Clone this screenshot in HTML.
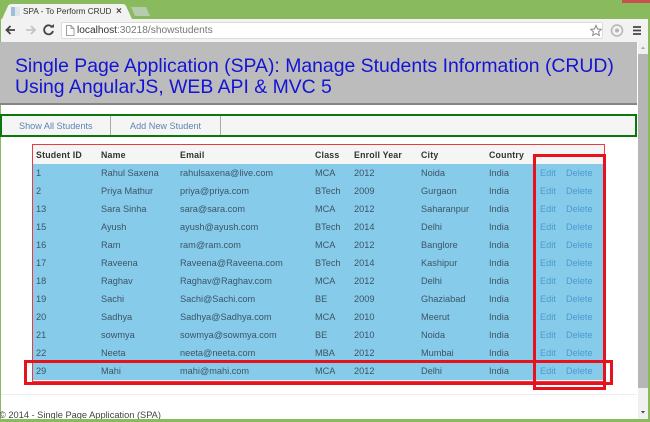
<!DOCTYPE html>
<html><head><meta charset="utf-8"><style>
html,body{margin:0;padding:0;width:650px;height:422px;overflow:hidden;background:#8aba5e}
body{position:relative;font-family:"Liberation Sans",sans-serif}
div,a,span{position:absolute;white-space:nowrap;box-sizing:border-box}
.c{font-size:9.2px;line-height:14px;color:#3a5566}
.h{font-size:8.8px;line-height:14px;color:#333;font-weight:bold;letter-spacing:.2px}
.l{font-size:9.2px;line-height:14px;color:#4a9ad0}
.r{position:absolute;border-style:solid;border-color:#e8121f;box-sizing:border-box}
</style></head><body>
<div style="left:622px;top:0;width:28px;height:3px;background:#c75050"></div>
<svg style="position:absolute;left:0;top:0" width="160" height="20"><path d="M2 19 L8 6 Q9 4 12 4 L122 4 Q125 4 126 6 L132 19 Z" fill="#f2f2f2"/><path d="M131 7 L146 7 L150 16 L135 16 Z" fill="#b5ccae"/><rect x="11" y="7" width="4" height="9" fill="#9cc0dc"/><rect x="15" y="7" width="5" height="9" fill="#dfe6ea"/></svg>
<div style="left:23px;top:5px;font-size:8.2px;line-height:13px;color:#333;width:88px;overflow:hidden">SPA - To Perform CRUD o</div>
<div style="left:116px;top:5px;font-size:10px;line-height:13px;color:#444;font-weight:bold">×</div>
<div style="left:1px;top:19px;width:647px;height:23px;background:#f2f2f2"></div>
<svg style="position:absolute;left:0;top:18px" width="60" height="23"><path d="M15 12 H7 M10.5 8 L6.500 12 L10.500 16" stroke="#444" stroke-width="1.800" fill="none"/><path d="M35 12 H26 M31 8 L35 12 L31 16" stroke="#c4c4c4" stroke-width="1.800" fill="none"/><path d="M52.500 9.500 A4.500 4.500 0 1 0 53 13" stroke="#444" stroke-width="1.800" fill="none"/><path d="M50 9.500 H54 V6 Z" fill="#444"/></svg>
<div style="left:61px;top:22px;width:542px;height:17px;background:#fff;border:1px solid #dcdcdc;border-radius:2px"></div>
<svg style="position:absolute;left:64px;top:24px" width="12" height="13"><path d="M2.500 1.500 H7 L10 4.500 V11.500 H2.500 Z M7 1.500 V4.500 H10" stroke="#888" stroke-width=".8" fill="#fff"/></svg>
<div style="left:77px;top:24px;font-size:10.15px;line-height:13px;color:#777"><span style="position:static;color:#333">localhost</span>:30218/showstudents</div>
<svg style="position:absolute;left:588px;top:22px" width="60" height="18"><path d="M8 3.500 L9.600 7 L13.200 7.400 L10.600 9.800 L11.300 13.400 L8 11.600 L4.700 13.400 L5.400 9.800 L2.800 7.400 L6.400 7 Z" fill="#fff" stroke="#888" stroke-width="1"/><circle cx="29" cy="8.500" r="5.500" fill="none" stroke="#b5b5b5" stroke-width="1.500"/><circle cx="29" cy="8.500" r="2" fill="#b5b5b5"/><path d="M45 5 H53 M45 8.500 H53 M45 12 H53" stroke="#444" stroke-width="1.800"/></svg>
<div style="left:1px;top:42px;width:647px;height:377px;background:#fff"></div>
<div style="left:638px;top:42px;width:10px;height:377px;background:#f0f0f0"></div>
<div style="left:638px;top:54px;width:10px;height:334px;background:#b6b6b6"></div>
<svg style="position:absolute;left:638px;top:44px" width="10" height="8"><path d="M3 5 L5 2.500 L7 5 Z" fill="#aaa"/></svg>
<svg style="position:absolute;left:638px;top:408px" width="10" height="8"><path d="M3 3 L5 5.500 L7 3 Z" fill="#444"/></svg>
<div style="left:0;top:42px;width:637px;height:63px;background:#bcbcbc;border-bottom:2px solid #858585"></div>
<div style="left:15px;top:56px;font-size:19.4px;line-height:21px;color:#1414d4">Single Page Application (SPA): Manage Students Information (CRUD)<br>Using AngularJS, WEB API &amp; MVC 5</div>
<div style="left:0;top:114px;width:637px;height:23px;background:#f5f5f5;border:2px solid #0a780a"></div>
<div style="left:110px;top:116px;width:1px;height:19px;background:#aaa"></div>
<div style="left:220px;top:116px;width:1px;height:19px;background:#aaa"></div>
<div style="left:19px;top:119px;font-size:9.15px;line-height:14px;color:#5b84b5">Show All Students</div>
<div style="left:130px;top:119px;font-size:9.15px;line-height:14px;color:#5b84b5">Add New Student</div>
<div style="left:32px;top:144px;width:573px;height:238px;background:#f5f5f5;border:1px solid #ea3a42;border-width:1.500px"></div>
<div style="left:33px;top:164px;width:571px;height:216px;background:#87cbea"></div>
<div class="h" style="left:36px;top:148px">Student ID</div><div class="h" style="left:101px;top:148px">Name</div><div class="h" style="left:180px;top:148px">Email</div><div class="h" style="left:315px;top:148px">Class</div><div class="h" style="left:354px;top:148px">Enroll Year</div><div class="h" style="left:421px;top:148px">City</div><div class="h" style="left:489px;top:148px">Country</div>
<div class="c" style="left:36px;top:166px">1</div><div class="c" style="left:101px;top:166px">Rahul Saxena</div><div class="c" style="left:180px;top:166px">rahulsaxena@live.com</div><div class="c" style="left:315px;top:166px">MCA</div><div class="c" style="left:354px;top:166px">2012</div><div class="c" style="left:421px;top:166px">Noida</div><div class="c" style="left:489px;top:166px">India</div><div class="l" style="left:540px;top:166px">Edit</div><div class="l" style="left:566px;top:166px">Delete</div>
<div class="c" style="left:36px;top:184px">2</div><div class="c" style="left:101px;top:184px">Priya Mathur</div><div class="c" style="left:180px;top:184px">priya@priya.com</div><div class="c" style="left:315px;top:184px">BTech</div><div class="c" style="left:354px;top:184px">2009</div><div class="c" style="left:421px;top:184px">Gurgaon</div><div class="c" style="left:489px;top:184px">India</div><div class="l" style="left:540px;top:184px">Edit</div><div class="l" style="left:566px;top:184px">Delete</div>
<div class="c" style="left:36px;top:202px">13</div><div class="c" style="left:101px;top:202px">Sara Sinha</div><div class="c" style="left:180px;top:202px">sara@sara.com</div><div class="c" style="left:315px;top:202px">MCA</div><div class="c" style="left:354px;top:202px">2012</div><div class="c" style="left:421px;top:202px">Saharanpur</div><div class="c" style="left:489px;top:202px">India</div><div class="l" style="left:540px;top:202px">Edit</div><div class="l" style="left:566px;top:202px">Delete</div>
<div class="c" style="left:36px;top:220px">15</div><div class="c" style="left:101px;top:220px">Ayush</div><div class="c" style="left:180px;top:220px">ayush@ayush.com</div><div class="c" style="left:315px;top:220px">BTech</div><div class="c" style="left:354px;top:220px">2014</div><div class="c" style="left:421px;top:220px">Delhi</div><div class="c" style="left:489px;top:220px">India</div><div class="l" style="left:540px;top:220px">Edit</div><div class="l" style="left:566px;top:220px">Delete</div>
<div class="c" style="left:36px;top:238px">16</div><div class="c" style="left:101px;top:238px">Ram</div><div class="c" style="left:180px;top:238px">ram@ram.com</div><div class="c" style="left:315px;top:238px">MCA</div><div class="c" style="left:354px;top:238px">2012</div><div class="c" style="left:421px;top:238px">Banglore</div><div class="c" style="left:489px;top:238px">India</div><div class="l" style="left:540px;top:238px">Edit</div><div class="l" style="left:566px;top:238px">Delete</div>
<div class="c" style="left:36px;top:256px">17</div><div class="c" style="left:101px;top:256px">Raveena</div><div class="c" style="left:180px;top:256px">Raveena@Raveena.com</div><div class="c" style="left:315px;top:256px">BTech</div><div class="c" style="left:354px;top:256px">2014</div><div class="c" style="left:421px;top:256px">Kashipur</div><div class="c" style="left:489px;top:256px">India</div><div class="l" style="left:540px;top:256px">Edit</div><div class="l" style="left:566px;top:256px">Delete</div>
<div class="c" style="left:36px;top:274px">18</div><div class="c" style="left:101px;top:274px">Raghav</div><div class="c" style="left:180px;top:274px">Raghav@Raghav.com</div><div class="c" style="left:315px;top:274px">MCA</div><div class="c" style="left:354px;top:274px">2012</div><div class="c" style="left:421px;top:274px">Delhi</div><div class="c" style="left:489px;top:274px">India</div><div class="l" style="left:540px;top:274px">Edit</div><div class="l" style="left:566px;top:274px">Delete</div>
<div class="c" style="left:36px;top:292px">19</div><div class="c" style="left:101px;top:292px">Sachi</div><div class="c" style="left:180px;top:292px">Sachi@Sachi.com</div><div class="c" style="left:315px;top:292px">BE</div><div class="c" style="left:354px;top:292px">2009</div><div class="c" style="left:421px;top:292px">Ghaziabad</div><div class="c" style="left:489px;top:292px">India</div><div class="l" style="left:540px;top:292px">Edit</div><div class="l" style="left:566px;top:292px">Delete</div>
<div class="c" style="left:36px;top:310px">20</div><div class="c" style="left:101px;top:310px">Sadhya</div><div class="c" style="left:180px;top:310px">Sadhya@Sadhya.com</div><div class="c" style="left:315px;top:310px">MCA</div><div class="c" style="left:354px;top:310px">2010</div><div class="c" style="left:421px;top:310px">Meerut</div><div class="c" style="left:489px;top:310px">India</div><div class="l" style="left:540px;top:310px">Edit</div><div class="l" style="left:566px;top:310px">Delete</div>
<div class="c" style="left:36px;top:328px">21</div><div class="c" style="left:101px;top:328px">sowmya</div><div class="c" style="left:180px;top:328px">sowmya@sowmya.com</div><div class="c" style="left:315px;top:328px">BE</div><div class="c" style="left:354px;top:328px">2010</div><div class="c" style="left:421px;top:328px">Noida</div><div class="c" style="left:489px;top:328px">India</div><div class="l" style="left:540px;top:328px">Edit</div><div class="l" style="left:566px;top:328px">Delete</div>
<div class="c" style="left:36px;top:346px">22</div><div class="c" style="left:101px;top:346px">Neeta</div><div class="c" style="left:180px;top:346px">neeta@neeta.com</div><div class="c" style="left:315px;top:346px">MBA</div><div class="c" style="left:354px;top:346px">2012</div><div class="c" style="left:421px;top:346px">Mumbai</div><div class="c" style="left:489px;top:346px">India</div><div class="l" style="left:540px;top:346px">Edit</div><div class="l" style="left:566px;top:346px">Delete</div>
<div class="c" style="left:36px;top:364px">29</div><div class="c" style="left:101px;top:364px">Mahi</div><div class="c" style="left:180px;top:364px">mahi@mahi.com</div><div class="c" style="left:315px;top:364px">MCA</div><div class="c" style="left:354px;top:364px">2012</div><div class="c" style="left:421px;top:364px">Delhi</div><div class="c" style="left:489px;top:364px">India</div><div class="l" style="left:540px;top:364px">Edit</div><div class="l" style="left:566px;top:364px">Delete</div>
<div class="r" style="left:24px;top:360px;width:589px;height:25px;border-width:3px"></div>
<div class="r" style="left:533px;top:154px;width:73px;height:236px;border-width:3px"></div>
<div style="left:1px;top:394px;width:636px;height:1px;background:#eee"></div>
<div style="left:-1px;top:408px;font-size:9.25px;line-height:14px;color:#444">© 2014 - Single Page Application (SPA)</div>
<div style="left:0;top:419px;width:650px;height:3px;background:#8aba5e"></div>
</body></html>
